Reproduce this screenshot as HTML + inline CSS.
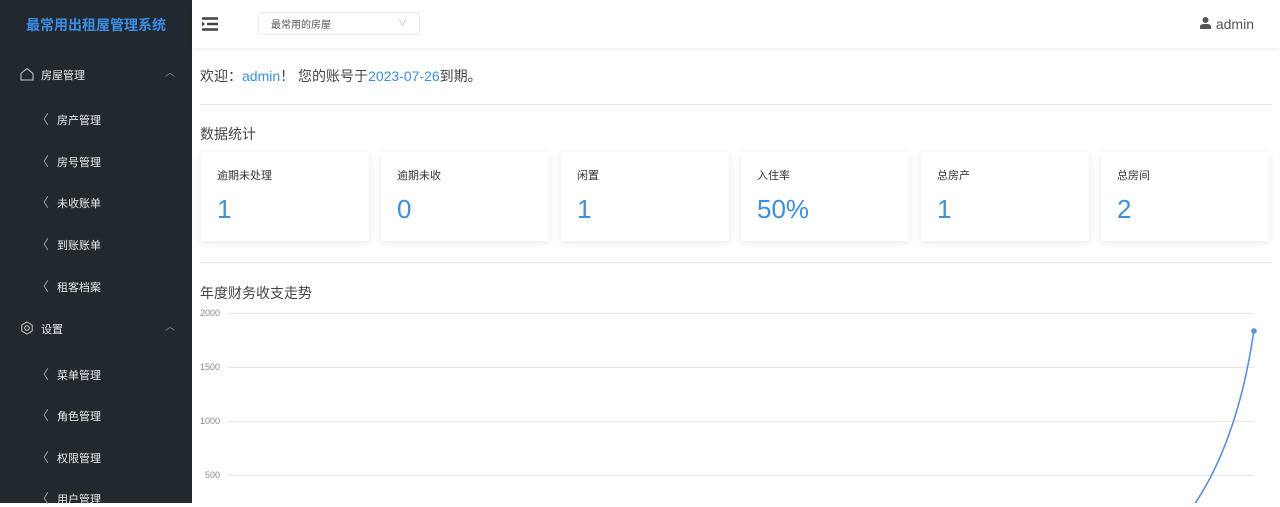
<!DOCTYPE html>
<html><head><meta charset="utf-8"><style>
*{margin:0;padding:0;box-sizing:border-box}
body{width:1280px;height:503px;overflow:hidden;background:#fff;font-family:"Liberation Sans","Noto Sans CJK SC",sans-serif;position:relative}
.side{position:absolute;left:0;top:0;width:192px;height:503px;background:#22292e;color:#e4e6e8}
.logo{position:absolute;left:0;width:192px;top:15px;text-align:center;color:#3b8ee8;font-size:14px;font-weight:bold}
.grp{position:absolute;left:20px;font-size:11px;color:#e8eaec}
.grp svg{position:absolute;left:0;top:0}
.grp span{position:absolute;left:21px;top:0;white-space:nowrap}
.caret{position:absolute;left:165px;font-size:10px;color:#8a9096}
.item{position:absolute;left:36px;font-size:11px;color:#e8eaec;white-space:nowrap}
.item i{font-style:normal;color:#a0a6ab;margin-right:8px;font-size:13px}
.hdr{position:absolute;left:192px;top:0;right:0;height:48px;background:#fff;box-shadow:0 2px 4px rgba(0,0,0,.06)}
.sel{position:absolute;left:258px;top:12px;width:162px;height:23px;border:1px solid #e6e8eb;border-radius:3px;font-size:10px;color:#555;padding:3px 12px}
.sel b{position:absolute;right:12px;top:3px;font-weight:normal;color:#bbb;font-size:9px}
.user{position:absolute;right:26px;top:16px;font-size:14px;color:#555}
.hr{position:absolute;left:200px;width:1072px;height:1px;background:#e8e8e8}
.card{position:absolute;top:152px;width:168px;height:89px;background:#fff;box-shadow:0 2px 8px rgba(0,0,0,.09)}
.card .t{position:absolute;left:16px;top:15px;font-size:11px;color:#333}
.card .v{position:absolute;left:16px;top:42px;font-size:26px;color:#3d8fdc}
.ax{position:absolute;left:200px;font-size:9px;color:#888}
.gl{position:absolute;left:228px;width:1026px;height:1px;background:#e6e6e6}
</style></head><body>
<div class="side">
<div class="logo">最常用出租屋管理系统</div>
<div class="grp" style="top:67px"><svg width="14" height="14" viewBox="0 0 14 14" fill="none" stroke="#c8ccd0" stroke-width="1"><path d="M1 6.5L7 1.5L13 6.5V13H1Z"/></svg><span>房屋管理</span></div>
<div class="caret" style="top:64px">︿</div>
<div class="item" style="top:109px"><i>〈</i>房产管理</div>
<div class="item" style="top:151px"><i>〈</i>房号管理</div>
<div class="item" style="top:192px"><i>〈</i>未收账单</div>
<div class="item" style="top:234px"><i>〈</i>到账账单</div>
<div class="item" style="top:276px"><i>〈</i>租客档案</div>
<div class="grp" style="top:321px"><svg width="14" height="14" viewBox="0 0 14 14" fill="none" stroke="#c8ccd0" stroke-width="1"><circle cx="7" cy="7" r="2.3"/><path d="M7 1L12.2 4V10L7 13L1.8 10V4Z"/></svg><span>设置</span></div>
<div class="caret" style="top:318px">︿</div>
<div class="item" style="top:364px"><i>〈</i>菜单管理</div>
<div class="item" style="top:405px"><i>〈</i>角色管理</div>
<div class="item" style="top:447px"><i>〈</i>权限管理</div>
<div class="item" style="top:488px"><i>〈</i>用户管理</div>
</div>
<div class="hdr"></div>
<svg style="position:absolute;left:202px;top:17px" width="16" height="14" viewBox="0 0 16 14"><path d="M0 1.5H16M5 7H16M0 12.5H16" stroke="#444" stroke-width="2.4"/><path d="M0 4.5L3 7L0 9.5Z" fill="#444"/></svg>
<div class="sel">最常用的房屋<b>∨</b></div>
<div class="user"><svg width="11" height="12" viewBox="0 0 11 12" style="margin-right:5px"><circle cx="5.5" cy="3" r="3" fill="#555"/><path d="M0 12V9.5C0 7.5 2 7 5.5 7S11 7.5 11 9.5V12Z" fill="#555"/></svg>admin</div>
<div style="position:absolute;left:200px;top:66px;font-size:14px;color:#444">欢迎：<span style="color:#3d8fdc">admin</span>！ 您的账号于<span style="color:#3d8fdc">2023-07-26</span>到期。</div>
<div class="hr" style="top:104px"></div>
<div style="position:absolute;left:200px;top:124px;font-size:14px;color:#444">数据统计</div>
<div class="card" style="left:201px"><div class="t">逾期未处理</div><div class="v">1</div></div>
<div class="card" style="left:381px"><div class="t">逾期未收</div><div class="v">0</div></div>
<div class="card" style="left:561px"><div class="t">闲置</div><div class="v">1</div></div>
<div class="card" style="left:741px"><div class="t">入住率</div><div class="v">50%</div></div>
<div class="card" style="left:921px"><div class="t">总房产</div><div class="v">1</div></div>
<div class="card" style="left:1101px"><div class="t">总房间</div><div class="v">2</div></div>
<div class="hr" style="top:262px"></div>
<div style="position:absolute;left:200px;top:283px;font-size:14px;color:#444">年度财务收支走势</div>
<div class="ax" style="top:308px">2000</div><div class="gl" style="top:313px"></div>
<div class="ax" style="top:362px">1500</div><div class="gl" style="top:367px"></div>
<div class="ax" style="top:416px">1000</div><div class="gl" style="top:421px"></div>
<div class="ax" style="top:470px;left:205px">500</div><div class="gl" style="top:475px"></div>
<svg style="position:absolute;left:0;top:0" width="1280" height="503"><path d="M1194 505Q1238 440 1254 330" fill="none" stroke="#5b8fdb" stroke-width="1.6"/><circle cx="1254" cy="331" r="2.8" fill="#5b8fdb"/></svg>
</body></html>
